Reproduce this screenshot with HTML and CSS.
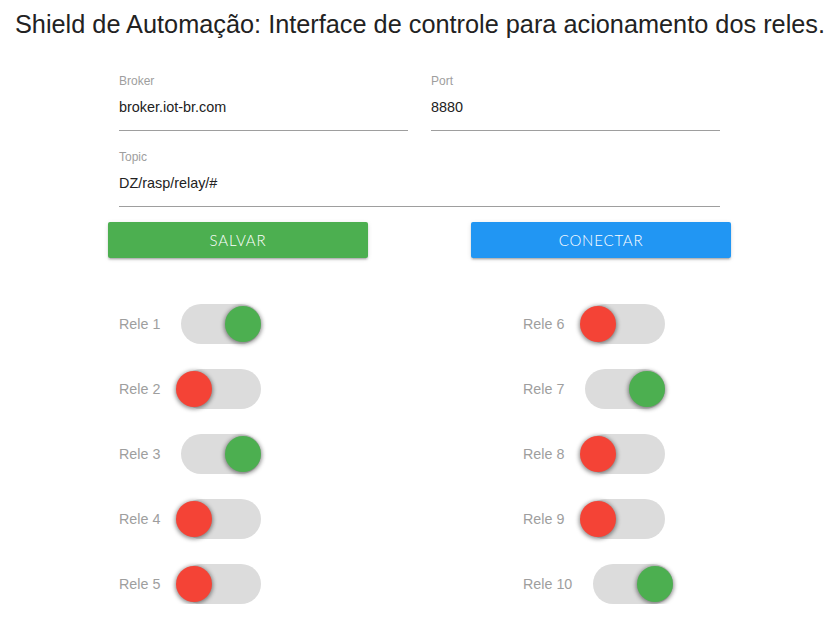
FILE: index.html
```html
<!DOCTYPE html>
<html lang="pt">
<head>
<meta charset="utf-8">
<title>Shield de Automação</title>
<link rel="stylesheet" href="styles.css">
</head>
<body>
<h1 class="title">Shield de Automação: Interface de controle para acionamento dos reles.</h1>
<div class="container">
  <div class="fields">
    <div class="field">
      <label class="field-label">Broker</label>
      <div class="field-value">broker.iot-br.com</div>
    </div>
    <div class="field">
      <label class="field-label">Port</label>
      <div class="field-value">8880</div>
    </div>
    <div class="field wide">
      <label class="field-label">Topic</label>
      <div class="field-value">DZ/rasp/relay/#</div>
    </div>
  </div>
  <div class="buttons">
    <button class="btn green">SALVAR</button>
    <button class="btn blue">CONECTAR</button>
  </div>
  <div class="relays">
    <div class="relay-col">
      <div class="relay"><span class="relay-label">Rele 1</span><span class="switch on"><span class="knob"></span></span></div>
      <div class="relay"><span class="relay-label">Rele 2</span><span class="switch off"><span class="knob"></span></span></div>
      <div class="relay"><span class="relay-label">Rele 3</span><span class="switch on"><span class="knob"></span></span></div>
      <div class="relay"><span class="relay-label">Rele 4</span><span class="switch off"><span class="knob"></span></span></div>
      <div class="relay"><span class="relay-label">Rele 5</span><span class="switch off"><span class="knob"></span></span></div>
    </div>
    <div class="relay-col">
      <div class="relay"><span class="relay-label">Rele 6</span><span class="switch off"><span class="knob"></span></span></div>
      <div class="relay"><span class="relay-label">Rele 7</span><span class="switch on"><span class="knob"></span></span></div>
      <div class="relay"><span class="relay-label">Rele 8</span><span class="switch off"><span class="knob"></span></span></div>
      <div class="relay"><span class="relay-label">Rele 9</span><span class="switch off"><span class="knob"></span></span></div>
      <div class="relay"><span class="relay-label">Rele 10</span><span class="switch on"><span class="knob"></span></span></div>
    </div>
  </div>
</div>
</body>
</html>
```
FILE: styles.css
```css
html, body {
  margin: 0;
  padding: 0;
  background: #fff;
}
body {
  font-family: "Liberation Sans", Arial, sans-serif;
  color: #222;
}
.title {
  margin: 0;
  padding-top: 9px;
  padding-left: 4px;
  font-family: "Liberation Sans", Arial, sans-serif;
  font-weight: normal;
  font-size: 25.3px;
  line-height: 30px;
  text-align: center;
  color: #222;
  white-space: nowrap;
}
.container {
  width: 623px;
  margin-left: 108px;
}
.fields {
  display: grid;
  grid-template-columns: 289px 289px;
  column-gap: 23px;
  padding: 0 11px;
  margin-top: 35px;
}
.field {
  display: flex;
  flex-direction: column;
  border-bottom: 1px solid #9e9e9e;
  height: 56px;
  margin-bottom: 19px;
}
.field.wide {
  grid-column: 1 / 3;
  margin-bottom: 0;
}
.field-label {
  font-size: 12px;
  color: #9e9e9e;
  line-height: 14px;
}
.field-value {
  margin-top: 11px;
  font-size: 14.4px;
  line-height: 16px;
  color: #222;
}
.buttons {
  display: flex;
  justify-content: space-between;
  margin-top: 15px;
}
.btn {
  width: 260px;
  height: 36px;
  border: none;
  border-radius: 2px;
  color: #fff;
  font-family: Lato, "Liberation Sans", sans-serif;
  font-weight: 300;
  font-size: 15px;
  letter-spacing: 0.8px;
  box-shadow: 0 2px 2px 0 rgba(0,0,0,0.14), 0 1px 5px 0 rgba(0,0,0,0.10), 0 3px 1px -2px rgba(0,0,0,0.12);
  padding: 0;
}
.green { background: #4caf50; }
.blue { background: #2196f3; }
.relays {
  display: grid;
  grid-template-columns: 404px auto;
  padding-left: 11px;
  margin-top: 46px;
}
.relay-col {
  display: flex;
  flex-direction: column;
  gap: 25px;
}
.relay {
  display: flex;
  align-items: center;
  height: 40px;
}
.relay-label {
  font-size: 14.3px;
  color: #9e9e9e;
  margin-right: 21px;
}
.switch {
  position: relative;
  width: 80px;
  height: 40px;
  border-radius: 20px;
  background: #dcdcdc;
}
.knob {
  position: absolute;
  top: 2px;
  width: 36px;
  height: 36px;
  border-radius: 50%;
  box-shadow: 0 1px 4px 1px rgba(0,0,0,0.45);
}
.switch.on .knob {
  right: 0;
  background: #4caf50;
}
.switch.off .knob {
  left: -5px;
  background: #f44336;
}
```
